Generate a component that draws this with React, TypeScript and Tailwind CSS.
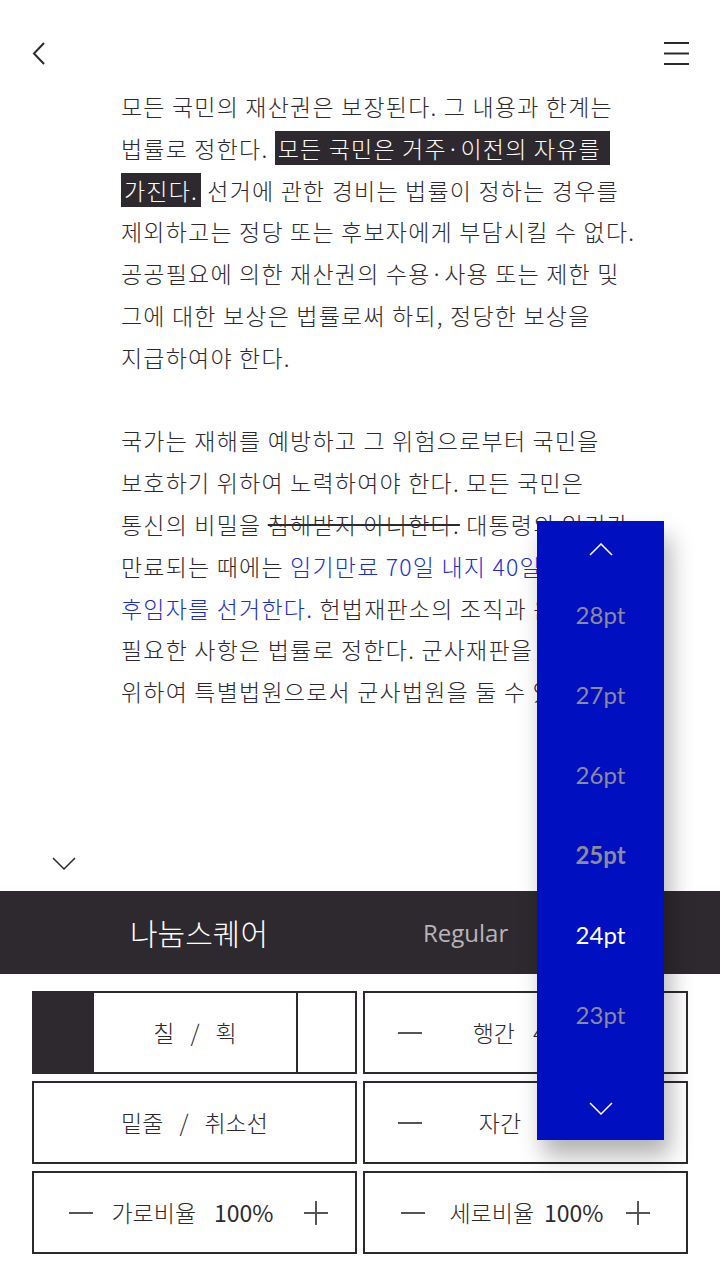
import React from "react";

const ink = "text-[#2e292e]";

function Hl({ children }: { children: React.ReactNode }) {
  return <span className="bg-[#2e292e] text-white px-[3px]">{children}</span>;
}

function Minus() {
  return (
    <svg width="24" height="4" viewBox="0 0 24 4" className="shrink-0">
      <line x1="0" y1="2" x2="24" y2="2" stroke="#555" strokeWidth="2" />
    </svg>
  );
}

function Plus() {
  return (
    <svg width="24" height="24" viewBox="0 0 24 24" className="shrink-0">
      <line x1="0" y1="12" x2="24" y2="12" stroke="#555" strokeWidth="2" />
      <line x1="12" y1="0" x2="12" y2="24" stroke="#555" strokeWidth="2" />
    </svg>
  );
}

function Chevron({ up, color = "white", w = 2 }: { up?: boolean; color?: string; w?: number }) {
  return (
    <svg width="24" height="13" viewBox="0 0 24 13">
      <polyline
        points={up ? "1,12 12,1 23,12" : "1,1 12,12 23,1"}
        fill="none"
        stroke={color}
        strokeWidth={w}
      />
    </svg>
  );
}

const lines: React.ReactNode[] = [
  "모든 국민의 재산권은 보장된다. 그 내용과 한계는",
  <>법률로 정한다. <Hl>모든 국민은 거주·이전의 자유를 </Hl></>,
  <><Hl>가진다.</Hl> 선거에 관한 경비는 법률이 정하는 경우를</>,
  "제외하고는 정당 또는 후보자에게 부담시킬 수 없다.",
  "공공필요에 의한 재산권의 수용·사용 또는 제한 및",
  "그에 대한 보상은 법률로써 하되, 정당한 보상을",
  "지급하여야 한다.",
  "\u00a0",
  "국가는 재해를 예방하고 그 위험으로부터 국민을",
  "보호하기 위하여 노력하여야 한다. 모든 국민은",
  <>통신의 비밀을 <span className="line-through decoration-[1.5px]">침해받지 아니한다.</span> 대통령의 임기가</>,
  <>만료되는 때에는 <span className="text-[#1b2fd0]">임기만료 70일 내지 40일 전에</span></>,
  <><span className="text-[#1b2fd0]">후임자를 선거한다.</span> 헌법재판소의 조직과 운영 기타</>,
  "필요한 사항은 법률로 정한다. 군사재판을 관할하기",
  "위하여 특별법원으로서 군사법원을 둘 수 있다.",
];

const sizes = ["28pt", "27pt", "26pt", "25pt", "24pt", "23pt"];

export default function App() {
  return (
    <div
      className={`relative w-[720px] h-[1280px] bg-white overflow-hidden flex flex-col ${ink}`}
      style={{ fontFamily: '"Noto Sans CJK KR", "Noto Sans", sans-serif' }}
    >
      {/* header */}
      <div className="h-[86px] flex justify-between items-start pt-[42px] pl-[32px] pr-[31px]">
        <svg width="14" height="23" viewBox="0 0 14 23">
          <polyline points="12,1 2,11.5 12,22" fill="none" stroke="#2e292e" strokeWidth="2" />
        </svg>
        <svg width="25" height="23" viewBox="0 0 25 23">
          <line x1="0" y1="1" x2="25" y2="1" stroke="#2e292e" strokeWidth="2" />
          <line x1="0" y1="11.5" x2="25" y2="11.5" stroke="#2e292e" strokeWidth="2" />
          <line x1="0" y1="22" x2="25" y2="22" stroke="#2e292e" strokeWidth="2" />
        </svg>
      </div>

      {/* body text */}
      <div className="pl-[121px] text-[23px] tracking-[1.2px] font-light leading-[41.8px] whitespace-pre">
        {lines.map((l, i) => (
          <div key={i}>{l}</div>
        ))}
      </div>

      {/* bottom panel */}
      <div className="mt-auto">
        <div className="pl-[52px] pb-[21px]">
          <Chevron color="#2e292e" w={1.5} />
        </div>

        <div className="h-[83px] bg-[#2e292e] flex items-center">
          <div className="ml-[130px] text-[30px] font-light text-white">나눔스퀘어</div>
          <div
            className="ml-[155px] text-[24px] text-[#b9b4b9]"
            style={{ fontFamily: '"Open Sans", sans-serif' }}
          >
            Regular
          </div>
        </div>

        <div className="grid grid-cols-2 gap-x-[6px] gap-y-[7px] px-[32px] pt-[17px] pb-[26px] text-[23px] font-light">
          <div className="h-[83px] border-2 border-[#2e292e] flex">
            <div className="w-[60px] bg-[#2e292e]" />
            <div className="flex-1 flex items-center justify-center gap-[16px]">
              <span>칠</span>
              <span>/</span>
              <span>획</span>
            </div>
            <div className="w-[59px] border-l-2 border-[#2e292e]" />
          </div>
          <div className="h-[83px] border-2 border-[#2e292e] flex items-center px-[33px]">
            <Minus />
            <div className="flex-1 flex justify-center gap-[18px]">
              <span>행간</span>
              <span>40%</span>
            </div>
            <Plus />
          </div>

          <div className="h-[83px] border-2 border-[#2e292e] flex items-center justify-center gap-[16px]">
            <span>밑줄</span>
            <span>/</span>
            <span>취소선</span>
          </div>
          <div className="h-[83px] border-2 border-[#2e292e] flex items-center px-[33px]">
            <Minus />
            <div className="flex-1 flex justify-center gap-[18px]">
              <span>자간</span>
              <span>0%</span>
            </div>
            <Plus />
          </div>

          <div className="h-[83px] border-2 border-[#2e292e] flex items-center justify-center pl-[8px]">
            <Minus />
            <span className="ml-[18px]">가로비율</span>
            <span className="ml-[18px] font-normal">100%</span>
            <span className="ml-[30px]"><Plus /></span>
          </div>
          <div className="h-[83px] border-2 border-[#2e292e] flex items-center justify-center">
            <Minus />
            <span className="ml-[24px]">세로비율</span>
            <span className="ml-[10px] font-normal">100%</span>
            <span className="ml-[22px]"><Plus /></span>
          </div>
        </div>
      </div>

      {/* size picker */}
      <div className="absolute left-[537px] top-[521px] w-[127px] h-[619px] bg-[#0010c0] shadow-[6px_16px_22px_rgba(0,0,0,0.3)] flex flex-col items-center pt-[22px]">
        <Chevron up w={1.5} />
        <div className="mt-[19px] flex flex-col items-center" style={{ fontFamily: "Lato, sans-serif" }}>
          {sizes.map((s) => (
            <div
              key={s}
              className={`h-[80px] flex items-center text-[24px] ${
                s === "25pt" ? "font-bold text-[#8b8b9c]" : s === "24pt" ? "text-white" : "text-[#8b8b9c]"
              }`}
            >
              {s}
            </div>
          ))}
        </div>
        <div className="mt-[47px]">
          <Chevron w={1.5} />
        </div>
      </div>
    </div>
  );
}
